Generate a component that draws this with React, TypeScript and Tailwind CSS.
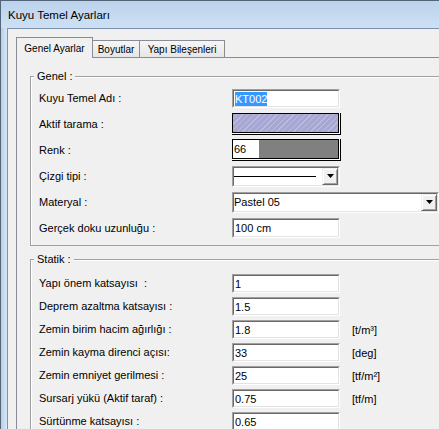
import React from 'react';

const Sunken: React.FC<{ className?: string; children?: React.ReactNode }> = ({ className = '', children }) => (
  <div className={`border border-t-[#a0a0a0] border-l-[#a0a0a0] border-b-white border-r-white ${className}`}>
    <div className="flex h-full w-full border border-t-[#696969] border-l-[#696969] border-b-[#e3e3e3] border-r-[#e3e3e3] bg-white">
      {children}
    </div>
  </div>
);

const DropButton = () => (
  <div className="flex h-full w-[16px] shrink-0 items-center justify-center border border-t-[#f0f0f0] border-l-[#f0f0f0] border-b-[#696969] border-r-[#696969] bg-[#f0f0f0] shadow-[inset_1px_1px_0_#fff,inset_-1px_-1px_0_#a0a0a0]">
    <svg width="7" height="4" viewBox="0 0 7 4">
      <path d="M0 0h7L3.5 4z" fill="#000" />
    </svg>
  </div>
);

const TextBox: React.FC<{ value: string; h?: string }> = ({ value, h = 'h-[19px]' }) => (
  <Sunken className={`w-[108px] ${h}`}>
    <span className="flex items-center pl-px leading-[14px]">{value}</span>
  </Sunken>
);

const Swatch: React.FC<{ children: React.ReactNode }> = ({ children }) => (
  <div className="h-[22px] w-[109px] border-b border-r border-[#000] bg-white pb-px pr-px">
    <div className="flex h-full w-full border border-black">{children}</div>
  </div>
);

const statik: [string, string, string][] = [
  ['Yapı önem katsayısı  :', '1', ''],
  ['Deprem azaltma katsayısı :', '1.5', ''],
  ['Zemin birim hacim ağırlığı :', '1.8', '[t/m³]'],
  ['Zemin kayma direnci açısı:', '33', '[deg]'],
  ['Zemin emniyet gerilmesi :', '25', '[tf/m²]'],
  ['Sursarj yükü (Aktif taraf) :', '0.75', '[tf/m]'],
  ['Sürtünme katsayısı :', '0.65', ''],
];

export default function App() {
  return (
    <div className="h-[429px] w-[439px] overflow-hidden bg-[#c9dcf1] font-['Liberation_Sans',Arial,sans-serif] text-[11px] text-black">
      <div className="flex h-[560px] w-[560px] flex-col border-l border-t border-[#54657a]">
        {/* title bar */}
        <div className="flex h-[27px] shrink-0 items-center bg-linear-to-b from-[#bcd3ec] to-[#cde0f5] pl-[7px] pt-[2px] text-[11.5px]">
          Kuyu Temel Ayarları
        </div>

        <div className="flex min-h-0 flex-1">
          <div className="w-[6px] shrink-0 bg-linear-to-r from-[#b9cfe7] to-[#d8e7f6]" />

          {/* client area */}
          <div className="flex-1 border-l border-t border-[#7c91aa] bg-[#f0f0f0] pl-[8px] pt-[8px]">
            {/* tabs */}
            <div className="relative z-10 -mb-px flex items-end text-[10px]">
              <div className="flex h-[21px] w-[77px] items-center justify-center border-x border-t border-[#898c95] bg-[#f0f0f0]">
                Genel Ayarlar
              </div>
              <div className="flex h-[18px] w-[47px] items-center justify-center border-y border-r border-[#898c95] bg-linear-to-b from-[#f6f6f6] to-[#e6e6e6]">
                Boyutlar
              </div>
              <div className="flex h-[18px] w-[85px] items-center justify-center border-y border-r border-[#898c95] bg-linear-to-b from-[#f6f6f6] to-[#e6e6e6]">
                Yapı Bileşenleri
              </div>
            </div>

            {/* tab panel */}
            <div className="h-[460px] w-[520px] border border-[#898c95] bg-[#f0f0f0] pl-[13px] pr-[10px] pt-[12px]">
              <fieldset className="border border-[#a0a0a0] pb-[4px] shadow-[inset_1px_1px_0_#fff]">
                <legend className="ml-[3px] bg-[#f0f0f0] px-[3px] leading-[13px]">Genel :</legend>
                <div className="grid auto-rows-[26px] grid-cols-[193px_auto] items-center pl-[8px] pt-[2px]">
                  <span>Kuyu Temel Adı :</span>
                  <Sunken className="h-[19px] w-[108px]">
                    <span className="ml-px mt-px h-[14px] bg-[#3399ff] leading-[14px] text-white">KT002</span>
                  </Sunken>

                  <span>Aktif tarama :</span>
                  <Swatch>
                    <div className="h-full w-full bg-[repeating-linear-gradient(135deg,#a7a7d3_0px,#a7a7d3_3px,#bdbddd_3px,#bdbddd_4px)]" />
                  </Swatch>

                  <span>Renk :</span>
                  <Swatch>
                    <div className="flex w-[26px] items-center bg-white pl-px leading-[14px]">66</div>
                    <div className="flex-1 bg-[#808080]" />
                  </Swatch>

                  <span>Çizgi tipi :</span>
                  <Sunken className="h-[21px] w-[108px]">
                    <div className="flex flex-1 items-center pr-[6px]">
                      <div className="h-px w-full bg-black" />
                    </div>
                    <DropButton />
                  </Sunken>

                  <span>Materyal :</span>
                  <Sunken className="h-[21px] w-[207px]">
                    <div className="flex flex-1 items-center leading-[14px]">Pastel 05</div>
                    <DropButton />
                  </Sunken>

                  <span>Gerçek doku uzunluğu :</span>
                  <TextBox value="100 cm" h="h-[20px]" />
                </div>
              </fieldset>

              <fieldset className="mt-[7px] border border-[#a0a0a0] pb-[4px] shadow-[inset_1px_1px_0_#fff]">
                <legend className="ml-[3px] bg-[#f0f0f0] px-[3px] leading-[13px]">Statik :</legend>
                <div className="grid auto-rows-[23px] grid-cols-[193px_108px_auto] items-center pl-[8px] pt-[6px]">
                  {statik.map(([label, value, unit]) => (
                    <React.Fragment key={label}>
                      <span className="whitespace-pre">{label}</span>
                      <TextBox value={value} />
                      <span className="pl-[12px] pt-[2px]">{unit}</span>
                    </React.Fragment>
                  ))}
                </div>
              </fieldset>
            </div>
          </div>
        </div>
      </div>
    </div>
  );
}
